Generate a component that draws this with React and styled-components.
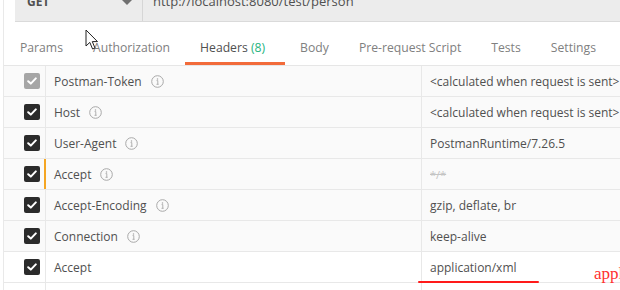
import React from 'react';
import styled, { createGlobalStyle } from 'styled-components';

const GlobalStyle = createGlobalStyle`
  html, body {
    margin: 0;
    padding: 0;
    background: #ffffff;
    overflow: hidden;
  }
  body {
    font-family: "Open Sans", "Noto Sans", sans-serif;
    font-size: 12px;
    color: #505050;
  }
`;

const Page = styled.div`
  position: relative;
  width: 616px;
  height: 290px;
  margin-left: 3px;
  border-left: 1px solid #e9e9e9;
  display: flex;
  flex-direction: column;
  overflow: hidden;
`;

const UrlBar = styled.div`
  display: flex;
  height: 40px;
  margin: -19px 0 0 11px;
  background: #ececec;
  border-bottom: 1px solid #dadada;
  flex-shrink: 0;
`;

const MethodSelect = styled.div`
  width: 105px;
  padding-left: 12px;
  display: flex;
  align-items: center;
  justify-content: space-between;
  padding-right: 10px;
  border-right: 1px solid #d6d6d6;
  font-weight: 700;
  color: #505050;
  box-sizing: content-box;
`;

const Caret = styled.span`
  width: 0;
  height: 0;
  border-left: 5px solid transparent;
  border-right: 5px solid transparent;
  border-top: 5px solid #707070;
  margin-top: 2px;
`;

const UrlText = styled.div`
  display: flex;
  align-items: center;
  padding-left: 10px;
  color: #505050;
  font-size: 13px;
`;

const Tabs = styled.div`
  display: flex;
  padding-left: 1px;
  flex-shrink: 0;
`;

const Tab = styled.div`
  padding: 18px ${p => (p.$active ? '20px' : '15px')} 6px 15px;
  line-height: 16px;
  font-size: 12.2px;
  color: ${p => (p.$active ? '#505050' : '#808080')};
  border-bottom: 3px solid ${p => (p.$active ? '#f26b3a' : 'transparent')};
  white-space: nowrap;
`;

const Count = styled.span`
  color: #26b47f;
`;

const Table = styled.div`
  border-top: 1px solid #e6e6e6;
  display: flex;
  flex-direction: column;
`;

const Row = styled.div`
  display: grid;
  grid-template-columns: 41px 376px 1fr;
  height: 30px;
  border-bottom: 1px solid #e8e8e8;
  background: ${p => (p.$white ? '#ffffff' : '#fafafa')};
`;

const CheckCell = styled.div`
  display: flex;
  align-items: center;
  justify-content: flex-end;
  padding-right: 5px;
`;

const Checkbox = styled.div`
  width: 16px;
  height: 16px;
  border-radius: 2px;
  background: ${p => (p.$disabled ? '#a6a6a6' : '#2b2b2b')};
  display: flex;
  align-items: center;
  justify-content: center;
`;

const KeyCell = styled.div`
  display: flex;
  align-items: center;
  gap: 9px;
  padding-left: 8px;
  border-left: ${p => (p.$modified ? '2px solid #f5a623' : '1px solid #e8e8e8')};
  margin-left: ${p => (p.$modified ? '-1px' : '0')};
  white-space: nowrap;
`;

const ValueCell = styled.div`
  display: flex;
  align-items: center;
  padding-left: 8px;
  border-left: 1px solid #e8e8e8;
  white-space: nowrap;
  overflow: hidden;
`;

const Placeholder = styled.span`
  color: #c4c4c4;
  font-size: 11px;
  text-decoration: line-through;
`;

const RedLine = styled.div`
  position: absolute;
  left: 414px;
  top: 281px;
  width: 121px;
  height: 2px;
  background: #ff1a1a;
  border-radius: 1px;
`;

const RedNote = styled.div`
  position: absolute;
  left: 590px;
  top: 264px;
  font-family: "Liberation Serif", serif;
  font-size: 17px;
  color: #ff3030;
  white-space: nowrap;
`;

const Pointer = styled.svg`
  position: absolute;
  left: 81px;
  top: 29px;
`;

const Check = () => (
  <svg width="10" height="8" viewBox="0 0 10 8">
    <path d="M1.2 4.2 L3.8 6.6 L8.8 1.4" fill="none" stroke="#fff" strokeWidth="2" strokeLinecap="round" strokeLinejoin="round" />
  </svg>
);

const Info = () => (
  <svg width="13" height="13" viewBox="0 0 13 13">
    <circle cx="6.5" cy="6.5" r="5.8" fill="none" stroke="#a8a8a8" strokeWidth="1" />
    <circle cx="6.5" cy="3.9" r="0.75" fill="#a8a8a8" />
    <path d="M5.6 5.6 H6.8 V9.3 M5.5 9.3 H7.6" fill="none" stroke="#a8a8a8" strokeWidth="0.9" />
  </svg>
);

const headers = [
  { key: 'Postman-Token', value: '<calculated when request is sent>', info: true, disabled: true },
  { key: 'Host', value: '<calculated when request is sent>', info: true },
  { key: 'User-Agent', value: 'PostmanRuntime/7.26.5', info: true },
  { key: 'Accept', value: '*/*', info: true, modified: true, placeholder: true },
  { key: 'Accept-Encoding', value: 'gzip, deflate, br', info: true },
  { key: 'Connection', value: 'keep-alive', info: true },
  { key: 'Accept', value: 'application/xml', white: true },
];

const tabs = ['Params', 'Authorization', 'Headers', 'Body', 'Pre-request Script', 'Tests', 'Settings'];

export default function App() {
  return (
    <>
      <GlobalStyle />
      <Page>
        <UrlBar>
          <MethodSelect>
            GET
            <Caret />
          </MethodSelect>
          <UrlText>http://localhost:8080/test/person</UrlText>
        </UrlBar>
        <Tabs>
          {tabs.map(t => (
            <Tab key={t} $active={t === 'Headers'}>
              {t}
              {t === 'Headers' && <Count> (8)</Count>}
            </Tab>
          ))}
        </Tabs>
        <Table>
          {headers.map((h, i) => (
            <Row key={i} $white={h.white}>
              <CheckCell>
                <Checkbox $disabled={h.disabled}>
                  <Check />
                </Checkbox>
              </CheckCell>
              <KeyCell $modified={h.modified}>
                {h.key}
                {h.info && <Info />}
              </KeyCell>
              <ValueCell>
                {h.placeholder ? <Placeholder>{h.value}</Placeholder> : h.value}
              </ValueCell>
            </Row>
          ))}
          <Row $white>
            <CheckCell />
            <KeyCell />
            <ValueCell />
          </Row>
        </Table>
        <RedLine />
        <RedNote>application/xml</RedNote>
        <Pointer width="14" height="22" viewBox="0 0 14 22">
          <path d="M1 1 L1 17 L4.8 13.4 L7.6 20 L10 19 L7.3 12.6 L12.5 12.6 Z" fill="#fff" stroke="#222" strokeWidth="1" strokeLinejoin="round" />
        </Pointer>
      </Page>
    </>
  );
}
